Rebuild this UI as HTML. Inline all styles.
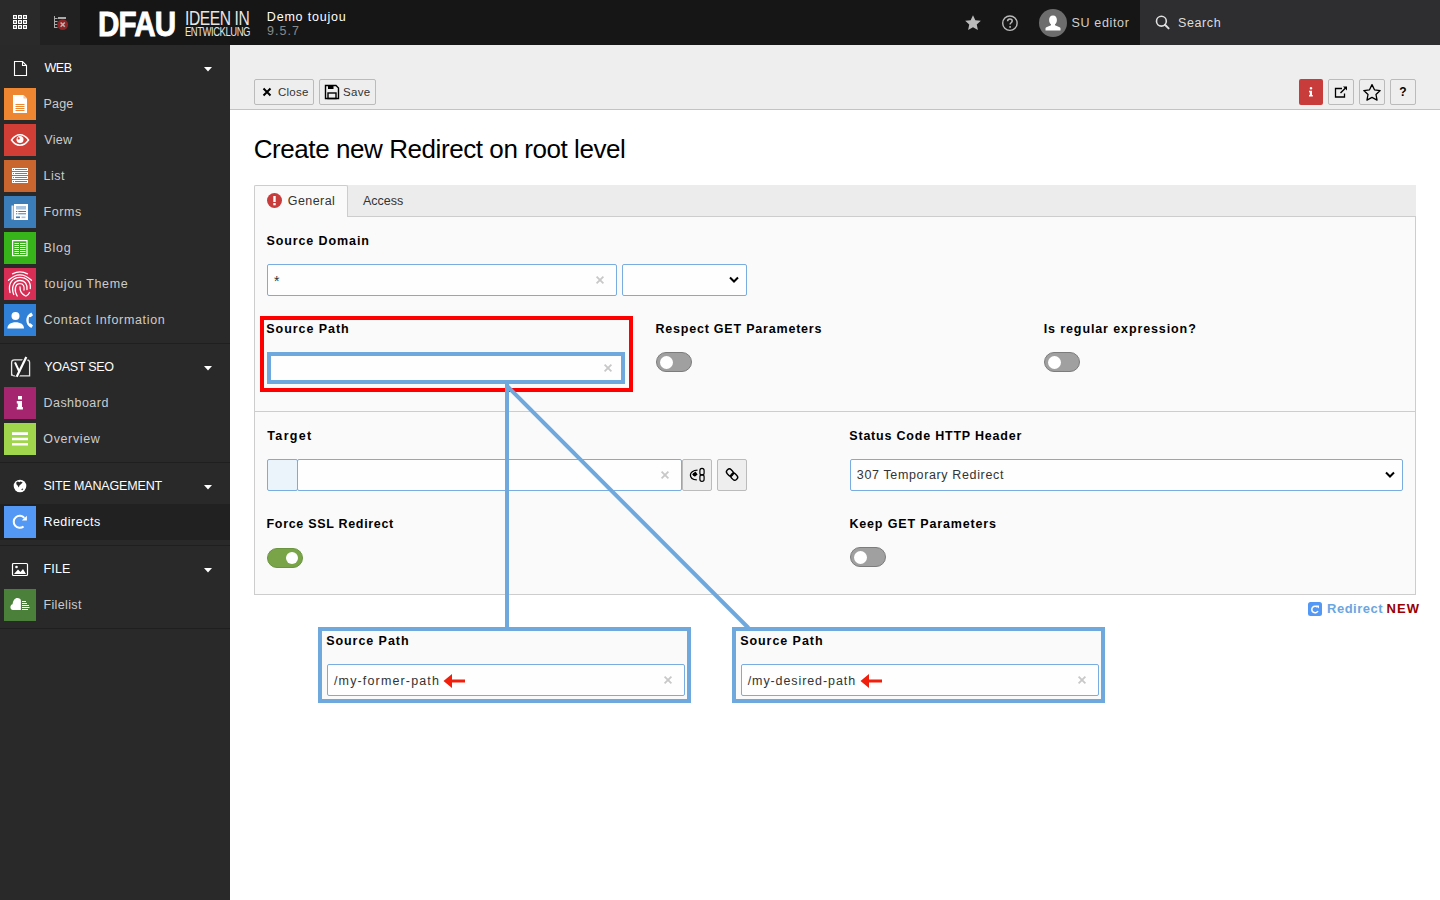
<!DOCTYPE html>
<html><head><meta charset="utf-8"><title>TYPO3 Redirect</title>
<style>
html,body{margin:0;padding:0;width:1440px;height:900px;overflow:hidden;background:#fff}
body{position:relative;font-family:"Liberation Sans",sans-serif}
.b{position:absolute;box-sizing:content-box}
svg.b{overflow:visible}
.t{position:absolute;white-space:pre;font-family:"Liberation Sans",sans-serif}
.logo1{font:bold 35.5px/35.5px "Liberation Sans",sans-serif;color:#fff;-webkit-text-stroke:0.9px #fff;transform:scaleX(0.835);transform-origin:0 0;letter-spacing:-1px}
.logo2{font:19.5px/19.5px "Liberation Sans",sans-serif;color:#e6e6e6;transform:scaleX(0.8);transform-origin:0 0;letter-spacing:-0.5px}
.logo3{font:12.5px/12.5px "Liberation Sans",sans-serif;color:#e6e6e6;transform:scaleX(0.757);transform-origin:0 0;letter-spacing:-0.6px}
</style></head><body>
<div class="b" style="left:0px;top:0px;width:1440px;height:45px;background:#161616"></div>
<div class="b" style="left:0px;top:0px;width:40px;height:45px;background:#2a2a2a"></div>
<div class="b" style="left:40px;top:0px;width:40px;height:45px;background:#212121"></div>
<div class="b" style="left:1140px;top:0px;width:300px;height:45px;background:#2e2d30"></div>
<svg class="b" style="left:0;top:0" width="40" height="45"><rect x="13.6" y="15.6" width="2.8" height="2.8" fill="none" stroke="#fff" stroke-width="1.2"/><rect x="13.6" y="20.6" width="2.8" height="2.8" fill="none" stroke="#fff" stroke-width="1.2"/><rect x="13.6" y="25.6" width="2.8" height="2.8" fill="none" stroke="#fff" stroke-width="1.2"/><rect x="18.6" y="15.6" width="2.8" height="2.8" fill="none" stroke="#fff" stroke-width="1.2"/><rect x="18.6" y="20.6" width="2.8" height="2.8" fill="none" stroke="#fff" stroke-width="1.2"/><rect x="18.6" y="25.6" width="2.8" height="2.8" fill="none" stroke="#fff" stroke-width="1.2"/><rect x="23.6" y="15.6" width="2.8" height="2.8" fill="none" stroke="#fff" stroke-width="1.2"/><rect x="23.6" y="20.6" width="2.8" height="2.8" fill="none" stroke="#fff" stroke-width="1.2"/><rect x="23.6" y="25.6" width="2.8" height="2.8" fill="none" stroke="#fff" stroke-width="1.2"/></svg>
<svg class="b" style="left:40px;top:0" width="40" height="45">
<path d="M14.5 16v12 M14.5 18.5h3 M14.5 21.5h3 M14.5 24.5h3 M14.5 27.5h3" stroke="#aaa" stroke-width="1" fill="none"/>
<rect x="18" y="17" width="8" height="2" fill="#aaa"/>
<circle cx="22.7" cy="24.6" r="5.4" fill="#8e2426"/>
<path d="M20.6 22.5l4.2 4.2M24.8 22.5l-4.2 4.2" stroke="#b4b4b4" stroke-width="1.6"/>
</svg>
<div class="b logo1" style="left:98px;top:6.5px;">DFAU</div>
<div class="b logo2" style="left:185px;top:9px;">IDEEN IN</div>
<div class="b logo3" style="left:185px;top:26px;">ENTWICKLUNG</div>
<svg class="b" style="left:960px;top:10px" width="26" height="26">
<path d="M13 5.2l2.35 5.05 5.5.6-4.1 3.75 1.15 5.4L13 17.2l-4.9 2.8 1.15-5.4-4.1-3.75 5.5-.6z" fill="#bbb"/></svg>
<svg class="b" style="left:997px;top:10px" width="26" height="26">
<circle cx="12.9" cy="13.2" r="7.2" fill="none" stroke="#bbb" stroke-width="1.4"/>
<path d="M10.6 11.3c0-1.4 1-2.3 2.3-2.3s2.3.9 2.3 2.1c0 1.6-2.1 1.7-2.1 3.3" fill="none" stroke="#bbb" stroke-width="1.5"/>
<circle cx="13.1" cy="16.9" r="0.95" fill="#bbb"/></svg>
<svg class="b" style="left:1039px;top:9px" width="28" height="28">
<circle cx="14" cy="14" r="14" fill="#6d6d6d"/>
<path d="M14 6.5c2.6 0 3.9 2 3.9 4.4 0 2.2-1 3.6-1.9 4.3v1l4.6 2.1c.6.3.9.8.9 1.3v1.9H6.5v-1.9c0-.5.3-1 .9-1.3l4.6-2.1v-1c-.9-.7-1.9-2.1-1.9-4.3 0-2.4 1.3-4.4 3.9-4.4z" fill="#fff"/></svg>
<svg class="b" style="left:1150px;top:10px" width="26" height="26">
<circle cx="11.4" cy="11.2" r="4.9" fill="none" stroke="#e0e0e0" stroke-width="1.6"/>
<path d="M15 14.8l3.6 3.6" stroke="#e0e0e0" stroke-width="2" stroke-linecap="round"/></svg>
<div class="b" style="left:0px;top:45px;width:230px;height:855px;background:#292929"></div>
<div class="b" style="left:0px;top:343px;width:230px;height:1px;background:#1f1f1f"></div>
<div class="b" style="left:0px;top:462px;width:230px;height:1px;background:#1f1f1f"></div>
<div class="b" style="left:0px;top:545px;width:230px;height:1px;background:#1f1f1f"></div>
<div class="b" style="left:0px;top:628px;width:230px;height:1px;background:#1f1f1f"></div>
<div class="b" style="left:0px;top:504px;width:230px;height:36px;background:#212121"></div>
<svg class="b" style="left:204px;top:67px" width="8" height="5"><path d="M0 0h8l-4 4.5z" fill="#fff"/></svg>
<svg class="b" style="left:204px;top:366px" width="8" height="5"><path d="M0 0h8l-4 4.5z" fill="#fff"/></svg>
<svg class="b" style="left:204px;top:485px" width="8" height="5"><path d="M0 0h8l-4 4.5z" fill="#fff"/></svg>
<svg class="b" style="left:204px;top:568px" width="8" height="5"><path d="M0 0h8l-4 4.5z" fill="#fff"/></svg>
<svg class="b" style="left:12px;top:59px" width="18" height="18">
<path d="M2.5 2.5h8l4 4v10h-12z M10.5 2.5v4h4" fill="none" stroke="#fff" stroke-width="1.1"/></svg>
<svg class="b" style="left:10px;top:355px" width="22" height="24">
<path d="M1.6 20.8V7.6Q1.6 4.8 4.4 4.8H16.8Q19.6 4.8 19.6 7.6V20.8H4.4Q1.6 20.8 1.6 18" fill="none" stroke="#e6e6e6" stroke-width="1.3"/>
<path d="M16.3 2L6.7 21.7" stroke="#292929" stroke-width="4.5"/>
<path d="M5 7.3L9.5 17" stroke="#fff" stroke-width="2"/>
<path d="M16.3 2L6.7 21.7" stroke="#fff" stroke-width="2.2"/></svg>
<svg class="b" style="left:12px;top:478px" width="16" height="16">
<circle cx="8" cy="8" r="6.3" fill="#fff"/>
<path d="M4.2 4.6L5.8 3.4L7.4 4.3L8.6 3.6L10.7 4.6L8.6 6.6L7.6 7.2L6.8 9.6L5.6 7.4L4.4 6.2Z" fill="#292929"/><path d="M9.2 11.8L10.3 10.6L11.3 11L10.2 12.3Z" fill="#292929"/></svg>
<svg class="b" style="left:11px;top:561px" width="18" height="16">
<rect x="1.5" y="2.5" width="15" height="12" rx="1" fill="none" stroke="#fff" stroke-width="1.2"/>
<path d="M3 13l4-4.5 2.5 2.5 2.5-3 3 5z" fill="#fff"/><circle cx="5.5" cy="6" r="1.3" fill="#fff"/></svg>
<svg class="b" style="left:4px;top:88px" width="32" height="32"><rect width="32" height="32" fill="#ee8531"/><path d="M9 7h10.5l3.5 3.5V25H9z" fill="#fff"/><path d="M19.5 7v3.5H23z" fill="#f6c49b"/><path d="M11.5 16.5h9M11.5 18.5h9M11.5 20.5h9M11.5 22.5h9" stroke="#ee8531" stroke-width="1"/></svg>
<svg class="b" style="left:4px;top:124px" width="32" height="32"><rect width="32" height="32" fill="#d13e36"/><path d="M7.5 16c2.4-3.4 5.3-5.2 8.5-5.2s6.1 1.8 8.5 5.2c-2.4 3.4-5.3 5.2-8.5 5.2S9.9 19.4 7.5 16z" fill="none" stroke="#fff" stroke-width="1.5"/><circle cx="16" cy="15.6" r="3.5" fill="#fff"/><circle cx="14.7" cy="14.4" r="1.1" fill="#d13e36"/></svg>
<svg class="b" style="left:4px;top:160px" width="32" height="32"><rect width="32" height="32" fill="#c9652e"/><rect x="8.5" y="8.5" width="15" height="2" fill="none" stroke="#fff" stroke-width="1"/><rect x="10" y="9" width="1" height="1" fill="#fff"/><rect x="8.5" y="12.5" width="15" height="2" fill="none" stroke="#fff" stroke-width="1"/><rect x="10" y="13" width="1" height="1" fill="#fff"/><rect x="8.5" y="16.5" width="15" height="2" fill="none" stroke="#fff" stroke-width="1"/><rect x="10" y="17" width="1" height="1" fill="#fff"/><rect x="8.5" y="20.5" width="15" height="2" fill="none" stroke="#fff" stroke-width="1"/><rect x="10" y="21" width="1" height="1" fill="#fff"/></svg>
<svg class="b" style="left:4px;top:196px" width="32" height="32"><rect width="32" height="32" fill="#3a7db9"/><path d="M7.5 9.5h2v14h-2z" fill="#dfe9f3"/><path d="M10 8h14v16H10z" fill="#fff"/><rect x="12" y="10" width="10" height="3.5" fill="#a9c4de"/><path d="M12 15.5h1.3M14.3 15.5h7.7M12 17.8h1.3M14.3 17.8h7.7" stroke="#3a7db9" stroke-width="1"/><rect x="12" y="20.5" width="4" height="1.6" fill="#3a7db9"/><rect x="17.5" y="20.5" width="4" height="1.6" fill="#a9c4de"/></svg>
<svg class="b" style="left:4px;top:232px" width="32" height="32"><rect width="32" height="32" fill="#37b41a"/><rect x="8.6" y="8.6" width="14.4" height="15" fill="none" stroke="#fff" stroke-width="1.2"/><path d="M10.5 11.5h11M10.5 13.5h11M10.5 15.5h11M10.5 17.5h11M10.5 19.5h11M10.5 21.5h11" stroke="#fff" stroke-width="1"/><path d="M15.5 11v11" stroke="#37b41a" stroke-width="1"/></svg>
<svg class="b" style="left:4px;top:268px" width="32" height="32"><rect width="32" height="32" fill="#d82d54"/><g fill="none" stroke="#fff" stroke-width="1.3" stroke-linecap="round"><path d="M8.5 5.8Q16 2 23.5 5.8"/><path d="M4.5 12.3Q16 1.5 27.5 12.3"/><path d="M6 24.5C3.5 15 9 9.3 16 9.3C23 9.3 27 14 26.3 20.5"/><path d="M9.7 26.5C6.8 19 10 12.5 16 12.5C21 12.5 23.6 16.5 23 21.5"/><path d="M13.2 28C9.8 22 11 15.7 16 15.7C19.3 15.7 20.6 18.3 20 22"/><path d="M16 18.8C15.8 23 18 26.3 21.5 28"/><path d="M25.5 24.5C24.8 26 23.8 27 22.5 27.8"/></g></svg>
<svg class="b" style="left:4px;top:304px" width="32" height="32"><rect width="32" height="32" fill="#2f80d6"/><circle cx="11.5" cy="12.1" r="4" fill="#fff"/><path d="M3.4 24.4C3.4 20.5 7 18.3 11.7 18.3C16.4 18.3 20 20.5 20 24.4Z" fill="#fff"/><path d="M27.3 8.5C24 10.2 22.3 13 22.3 16.3C22.3 19.6 24 22.4 27.3 24L29 21.4L26.6 19.3C25.6 19.8 24.9 19.3 24.8 18.3C24.6 17 24.6 15.6 24.8 14.3C24.9 13.3 25.6 12.8 26.6 13.3L29 11.2Z" fill="#fff"/></svg>
<svg class="b" style="left:4px;top:387px" width="32" height="32"><rect width="32" height="32" fill="#a5266e"/><rect x="14" y="9" width="4" height="3.5" fill="#fff"/><path d="M12.8 14H18V20H18.9V22.6H12.8V20H13.8V16.5H12.8Z" fill="#fff"/></svg>
<svg class="b" style="left:4px;top:423px" width="32" height="32"><rect width="32" height="32" fill="#a0d64c"/><path d="M8 10.6h16M8 16h16M8 21.3h16" stroke="#fff" stroke-width="2.6"/></svg>
<svg class="b" style="left:4px;top:506px" width="32" height="32"><rect width="32" height="32" fill="#5398f5"/><path d="M19.56 20.4A6 6 0 1 1 20.3 11.9" fill="none" stroke="#fff" stroke-width="2"/><path d="M17.8 14.6H22.9V9.8z" fill="#fff"/></svg>
<svg class="b" style="left:4px;top:589px" width="32" height="32"><rect width="32" height="32" fill="#4a8039"/><path d="M16.9 21H9C7.5 21 6.4 19.8 6.4 18.2C6.4 16.6 7.3 15.4 8.6 15.2C8.9 11.6 10.8 9 13.4 9C15.4 9 16.9 10.2 16.9 11.5Z" fill="#fff"/><path d="M18 12.5h4M18 14.5h5M18 16.5h7M18 18.5h7.5M18 20.5h6" stroke="#fff" stroke-width="1"/></svg>
<div class="b" style="left:230px;top:45px;width:1210px;height:64px;background:#eeeeee"></div>
<div class="b" style="left:230px;top:109px;width:1210px;height:1px;background:#c3c3c3"></div>
<div class="b" style="left:230px;top:110px;width:1210px;height:790px;background:#fff"></div>
<div class="b" style="left:254px;top:79px;width:58px;height:24px;background:#eeeeee;border:1px solid #bbbbbb;border-radius:2px"></div>
<div class="b" style="left:319px;top:79px;width:55px;height:24px;background:#eeeeee;border:1px solid #bbbbbb;border-radius:2px"></div>
<div class="b" style="left:1328px;top:79px;width:24px;height:24px;background:#eeeeee;border:1px solid #bbbbbb;border-radius:2px"></div>
<div class="b" style="left:1359px;top:79px;width:24px;height:24px;background:#eeeeee;border:1px solid #bbbbbb;border-radius:2px"></div>
<div class="b" style="left:1390px;top:79px;width:24px;height:24px;background:#eeeeee;border:1px solid #bbbbbb;border-radius:2px"></div>
<div class="b" style="left:1299px;top:79px;width:24px;height:26px;background:#c83c3c;border-radius:2px"></div>
<svg class="b" style="left:254px;top:79px" width="60" height="26"><path d="M9.5 9.5l7 7M16.5 9.5l-7 7" stroke="#000" stroke-width="2"/></svg>
<svg class="b" style="left:319px;top:79px" width="26" height="26">
<path d="M6.5 6.5h10.5l2.5 2.5v10.5h-13z" fill="none" stroke="#000" stroke-width="1.4"/><rect x="9" y="6" width="5.5" height="4" fill="#000"/><rect x="9" y="14" width="8" height="5.5" fill="none" stroke="#000" stroke-width="1.4"/></svg>
<svg class="b" style="left:1299px;top:79px" width="24" height="26">
<path d="M10.7 9.3a1.3 1.3 0 1 0 2.6 0a1.3 1.3 0 1 0 -2.6 0zM10 11.7h3v4.4h.8v1.5h-3.8v-1.5h.8v-2.9h-.8z" fill="#fff"/></svg>
<svg class="b" style="left:1328px;top:79px" width="26" height="26">
<path d="M14 9.5h-6.5v8.5h9v-3.5" fill="none" stroke="#000" stroke-width="1.3"/><path d="M12.5 14l5.5-5.5" stroke="#000" stroke-width="1.4"/><path d="M15 7.5h4v4z" fill="#000"/></svg>
<svg class="b" style="left:1359px;top:79px" width="26" height="26">
<path d="M13.00 5.60L15.47 10.80L21.18 11.54L16.99 15.50L18.05 21.16L13.00 18.40L7.95 21.16L9.01 15.50L4.82 11.54L10.53 10.80Z" fill="none" stroke="#000" stroke-width="1.3" stroke-linejoin="round"/></svg>
<div class="b" style="left:1390px;top:79px;width:26px;height:26px;font:bold 12px/26px 'Liberation Sans',sans-serif;text-align:center;color:#000">?</div>
<div class="b" style="left:254px;top:185px;width:1162px;height:31px;background:#ececec"></div>
<div class="b" style="left:254px;top:216px;width:1160px;height:377px;background:#fafafa;border:1px solid #cdcdcd"></div>
<div class="b" style="left:254px;top:185px;width:92px;height:31px;background:#fafafa;border:1px solid #cdcdcd;border-bottom:none;border-radius:2px 2px 0 0"></div>
<div class="b" style="left:255px;top:216px;width:92px;height:1px;background:#fafafa"></div>
<div class="b" style="left:254px;top:411px;width:1162px;height:1px;background:#cdcdcd"></div>
<svg class="b" style="left:266px;top:192px" width="17" height="17"><circle cx="8.5" cy="8.5" r="7.5" fill="#c83c3c"/><rect x="7.3" y="4" width="2.4" height="6" fill="#fff"/><rect x="7.3" y="11" width="2.4" height="2.3" fill="#fff"/></svg>
<div class="b" style="left:267px;top:264px;width:348px;height:30px;background:#fefefe;border:1px solid #79ade0;border-radius:2px;"></div>
<svg class="b" style="left:595px;top:275px" width="10" height="10"><path d="M1.6 1.6l6.8 6.8M8.4 1.6l-6.8 6.8" stroke="#c8c8c8" stroke-width="1.8"/></svg>
<div class="b" style="left:622px;top:264px;width:123px;height:30px;background:#fefefe;border:1px solid #79ade0;border-radius:2px;"></div>
<svg class="b" style="left:729px;top:276px" width="10" height="8"><path d="M1 1.5l4 4 4-4" fill="none" stroke="#000" stroke-width="2"/></svg>
<div class="b" style="left:267px;top:352px;width:356px;height:30px;background:#fefefe;border:1px solid #79ade0;border-radius:2px;"></div>
<svg class="b" style="left:603px;top:363px" width="10" height="10"><path d="M1.6 1.6l6.8 6.8M8.4 1.6l-6.8 6.8" stroke="#c8c8c8" stroke-width="1.8"/></svg>
<div class="b" style="left:656px;top:352px;width:34px;height:18px;background:#a0a0a0;border:1px solid #7c7c7c;border-radius:10px"></div><div class="b" style="left:660px;top:355.5px;width:13px;height:13px;border-radius:50%;background:#fff"></div>
<div class="b" style="left:1044px;top:352px;width:34px;height:18px;background:#a0a0a0;border:1px solid #7c7c7c;border-radius:10px"></div><div class="b" style="left:1048px;top:355.5px;width:13px;height:13px;border-radius:50%;background:#fff"></div>
<div class="b" style="left:267px;top:459px;width:29px;height:30px;background:#ebf3fb;border:1px solid #79ade0;border-radius:2px;"></div>
<div class="b" style="left:297px;top:459px;width:383px;height:30px;background:#fefefe;border:1px solid #79ade0;border-radius:2px;"></div>
<svg class="b" style="left:660px;top:470px" width="10" height="10"><path d="M1.6 1.6l6.8 6.8M8.4 1.6l-6.8 6.8" stroke="#c8c8c8" stroke-width="1.8"/></svg>
<div class="b" style="left:682px;top:459px;width:28px;height:30px;background:#eeeeee;border:1px solid #bbbbbb;border-radius:2px"></div>
<div class="b" style="left:717px;top:459px;width:28px;height:30px;background:#eeeeee;border:1px solid #bbbbbb;border-radius:2px"></div>
<svg class="b" style="left:682px;top:459px" width="30" height="32">
<path d="M15.5 11.2C11 11.2 8.4 13.6 8.4 15.9C8.4 18.3 10.6 20.6 14.8 20.8" fill="none" stroke="#000" stroke-width="1.3"/>
<path d="M10.2 15.2L13.5 12.6L15.6 15.6L12.8 17.8Z" fill="#000"/><circle cx="12.4" cy="15.4" r="1.7" fill="#000"/>
<rect x="17.9" y="9.4" width="4.2" height="6.8" rx="2.1" fill="none" stroke="#000" stroke-width="1.2"/><rect x="17.9" y="15.6" width="4.2" height="6.8" rx="2.1" fill="none" stroke="#000" stroke-width="1.2"/></svg>
<svg class="b" style="left:717px;top:459px" width="30" height="32">
<g transform="rotate(-45 15 15.5)"><rect x="12.2" y="9" width="5.6" height="7.2" rx="2.6" fill="none" stroke="#000" stroke-width="1.4"/><rect x="12.2" y="15" width="5.6" height="7.2" rx="2.6" fill="none" stroke="#000" stroke-width="1.4"/></g></svg>
<div class="b" style="left:850px;top:459px;width:551px;height:30px;background:#fefefe;border:1px solid #79ade0;border-radius:2px;"></div>
<svg class="b" style="left:1385px;top:471px" width="10" height="8"><path d="M1 1.5l4 4 4-4" fill="none" stroke="#000" stroke-width="2"/></svg>
<div class="b" style="left:267px;top:548px;width:34px;height:18px;background:#79a548;border:1px solid #6a9440;border-radius:10px"></div><div class="b" style="left:286px;top:552px;width:12px;height:12px;border-radius:50%;background:#fff"></div>
<div class="b" style="left:850px;top:547px;width:34px;height:18px;background:#a0a0a0;border:1px solid #7c7c7c;border-radius:10px"></div><div class="b" style="left:854px;top:550.5px;width:13px;height:13px;border-radius:50%;background:#fff"></div>
<svg class="b" style="left:1308px;top:602px" width="14" height="14"><rect width="14" height="14" rx="2.5" fill="#5398f5"/>
<path d="M9.6 5.3A3.3 3.3 0 1 0 10 9" fill="none" stroke="#fff" stroke-width="1.5"/><path d="M8 3.5h3v3z" fill="#fff"/></svg>
<div class="b" style="left:260px;top:316px;width:373px;height:76px;box-sizing:border-box;border:4px solid #ff0000"></div>
<div class="b" style="left:267px;top:352px;width:358px;height:32px;box-sizing:border-box;border:4px solid #6fa8dc"></div>
<div class="b" style="left:318px;top:627px;width:373px;height:76px;box-sizing:border-box;border:4px solid #6fa8dc;background:#fafafa"></div>
<div class="b" style="left:327px;top:664px;width:356px;height:30px;background:#fefefe;border:1px solid #79ade0;border-radius:2px;"></div>
<svg class="b" style="left:663px;top:675px" width="10" height="10"><path d="M1.6 1.6l6.8 6.8M8.4 1.6l-6.8 6.8" stroke="#c8c8c8" stroke-width="1.8"/></svg>
<svg class="b" style="left:443px;top:673px" width="24" height="16"><path d="M0.5 8L9 1V6.6H22V9.4H9V15Z" fill="#f01e0a"/></svg>
<div class="b" style="left:732px;top:627px;width:373px;height:76px;box-sizing:border-box;border:4px solid #6fa8dc;background:#fafafa"></div>
<div class="b" style="left:741px;top:664px;width:356px;height:30px;background:#fefefe;border:1px solid #79ade0;border-radius:2px;"></div>
<svg class="b" style="left:1077px;top:675px" width="10" height="10"><path d="M1.6 1.6l6.8 6.8M8.4 1.6l-6.8 6.8" stroke="#c8c8c8" stroke-width="1.8"/></svg>
<svg class="b" style="left:860px;top:673px" width="24" height="16"><path d="M0.5 8L9 1V6.6H22V9.4H9V15Z" fill="#f01e0a"/></svg>
<svg class="b" style="left:0;top:0" width="1440" height="900">
<path d="M507 384V627" stroke="#6fa8dc" stroke-width="4"/>
<path d="M507 386L748.5 628" stroke="#6fa8dc" stroke-width="4"/></svg>
<div class="t" style="left:266.8px;top:11px;font-size:12.5px;line-height:12.5px;font-weight:400;color:#fff;letter-spacing:0.810px">Demo toujou</div>
<div class="t" style="left:267.0px;top:25px;font-size:12.5px;line-height:12.5px;font-weight:400;color:#8a8a8a;letter-spacing:1.050px">9.5.7</div>
<div class="t" style="left:1071.5px;top:17px;font-size:12.5px;line-height:12.5px;font-weight:400;color:#d0d0d0;letter-spacing:0.656px">SU editor</div>
<div class="t" style="left:1178.0px;top:17px;font-size:12.5px;line-height:12.5px;font-weight:400;color:#ddd;letter-spacing:0.600px">Search</div>
<div class="t" style="left:44.4px;top:62px;font-size:12.5px;line-height:12.5px;font-weight:400;color:#fff;letter-spacing:-0.400px">WEB</div>
<div class="t" style="left:43.4px;top:98px;font-size:12.5px;line-height:12.5px;font-weight:400;color:#ccc;letter-spacing:0.233px">Page</div>
<div class="t" style="left:44.2px;top:134px;font-size:12.5px;line-height:12.5px;font-weight:400;color:#ccc;letter-spacing:0.333px">View</div>
<div class="t" style="left:43.4px;top:170px;font-size:12.5px;line-height:12.5px;font-weight:400;color:#ccc;letter-spacing:0.533px">List</div>
<div class="t" style="left:43.5px;top:206px;font-size:12.5px;line-height:12.5px;font-weight:400;color:#ccc;letter-spacing:0.575px">Forms</div>
<div class="t" style="left:43.5px;top:242px;font-size:12.5px;line-height:12.5px;font-weight:400;color:#ccc;letter-spacing:0.733px">Blog</div>
<div class="t" style="left:44.5px;top:278px;font-size:12.5px;line-height:12.5px;font-weight:400;color:#ccc;letter-spacing:0.636px">toujou Theme</div>
<div class="t" style="left:43.5px;top:314px;font-size:12.5px;line-height:12.5px;font-weight:400;color:#ccc;letter-spacing:0.678px">Contact Information</div>
<div class="t" style="left:44.3px;top:361px;font-size:12.5px;line-height:12.5px;font-weight:400;color:#fff;letter-spacing:-0.287px">YOAST SEO</div>
<div class="t" style="left:43.5px;top:397px;font-size:12.5px;line-height:12.5px;font-weight:400;color:#ccc;letter-spacing:0.463px">Dashboard</div>
<div class="t" style="left:43.3px;top:433px;font-size:12.5px;line-height:12.5px;font-weight:400;color:#ccc;letter-spacing:0.629px">Overview</div>
<div class="t" style="left:43.4px;top:480px;font-size:12.5px;line-height:12.5px;font-weight:400;color:#fff;letter-spacing:-0.143px">SITE MANAGEMENT</div>
<div class="t" style="left:43.4px;top:516px;font-size:12.5px;line-height:12.5px;font-weight:400;color:#fff;letter-spacing:0.500px">Redirects</div>
<div class="t" style="left:43.4px;top:563px;font-size:12.5px;line-height:12.5px;font-weight:400;color:#fff;letter-spacing:0.200px">FILE</div>
<div class="t" style="left:43.4px;top:599px;font-size:12.5px;line-height:12.5px;font-weight:400;color:#ccc;letter-spacing:0.371px">Filelist</div>
<div class="t" style="left:277.9px;top:87px;font-size:11.5px;line-height:11.5px;font-weight:400;color:#333;letter-spacing:0.275px">Close</div>
<div class="t" style="left:342.9px;top:87px;font-size:11.5px;line-height:11.5px;font-weight:400;color:#333;letter-spacing:0.367px">Save</div>
<div class="t" style="left:253.7px;top:136px;font-size:26px;line-height:26px;font-weight:400;color:#000;letter-spacing:-0.428px">Create new Redirect on root level</div>
<div class="t" style="left:287.8px;top:195px;font-size:12.5px;line-height:12.5px;font-weight:400;color:#333;letter-spacing:0.425px">General</div>
<div class="t" style="left:363.0px;top:195px;font-size:12.5px;line-height:12.5px;font-weight:400;color:#333;letter-spacing:0.000px">Access</div>
<div class="t" style="left:266.4px;top:235px;font-size:12.5px;line-height:12.5px;font-weight:700;color:#000;letter-spacing:0.908px">Source Domain</div>
<div class="t" style="left:266.3px;top:323px;font-size:12.5px;line-height:12.5px;font-weight:700;color:#000;letter-spacing:0.940px">Source Path</div>
<div class="t" style="left:655.4px;top:323px;font-size:12.5px;line-height:12.5px;font-weight:700;color:#000;letter-spacing:0.795px">Respect GET Parameters</div>
<div class="t" style="left:1043.7px;top:323px;font-size:12.5px;line-height:12.5px;font-weight:700;color:#000;letter-spacing:0.890px">Is regular expression?</div>
<div class="t" style="left:267.3px;top:430px;font-size:12.5px;line-height:12.5px;font-weight:700;color:#000;letter-spacing:1.340px">Target</div>
<div class="t" style="left:849.3px;top:430px;font-size:12.5px;line-height:12.5px;font-weight:700;color:#000;letter-spacing:0.791px">Status Code HTTP Header</div>
<div class="t" style="left:266.5px;top:518px;font-size:12.5px;line-height:12.5px;font-weight:700;color:#000;letter-spacing:0.688px">Force SSL Redirect</div>
<div class="t" style="left:849.4px;top:518px;font-size:12.5px;line-height:12.5px;font-weight:700;color:#000;letter-spacing:0.844px">Keep GET Parameters</div>
<div class="t" style="left:326.2px;top:635px;font-size:12.5px;line-height:12.5px;font-weight:700;color:#000;letter-spacing:0.940px">Source Path</div>
<div class="t" style="left:740.2px;top:635px;font-size:12.5px;line-height:12.5px;font-weight:700;color:#000;letter-spacing:0.940px">Source Path</div>
<div class="t" style="left:856.8px;top:469px;font-size:12.5px;line-height:12.5px;font-weight:400;color:#333;letter-spacing:0.638px">307 Temporary Redirect</div>
<div class="t" style="left:334.0px;top:675px;font-size:12.5px;line-height:12.5px;font-weight:400;color:#333;letter-spacing:1.143px">/my-former-path</div>
<div class="t" style="left:747.7px;top:675px;font-size:12.5px;line-height:12.5px;font-weight:400;color:#333;letter-spacing:0.907px">/my-desired-path</div>
<div class="t" style="left:1327.0px;top:602px;font-size:13px;line-height:13px;font-weight:700;color:#6aa6e0;letter-spacing:0.514px">Redirect</div>
<div class="t" style="left:274.0px;top:274px;font-size:14px;line-height:14px;font-weight:400;color:#333;letter-spacing:0.000px">*</div>
<div class="t" style="left:1386.4px;top:602px;font-size:13px;line-height:13px;font-weight:700;color:#990000;letter-spacing:1.150px">NEW</div>
</body></html>
